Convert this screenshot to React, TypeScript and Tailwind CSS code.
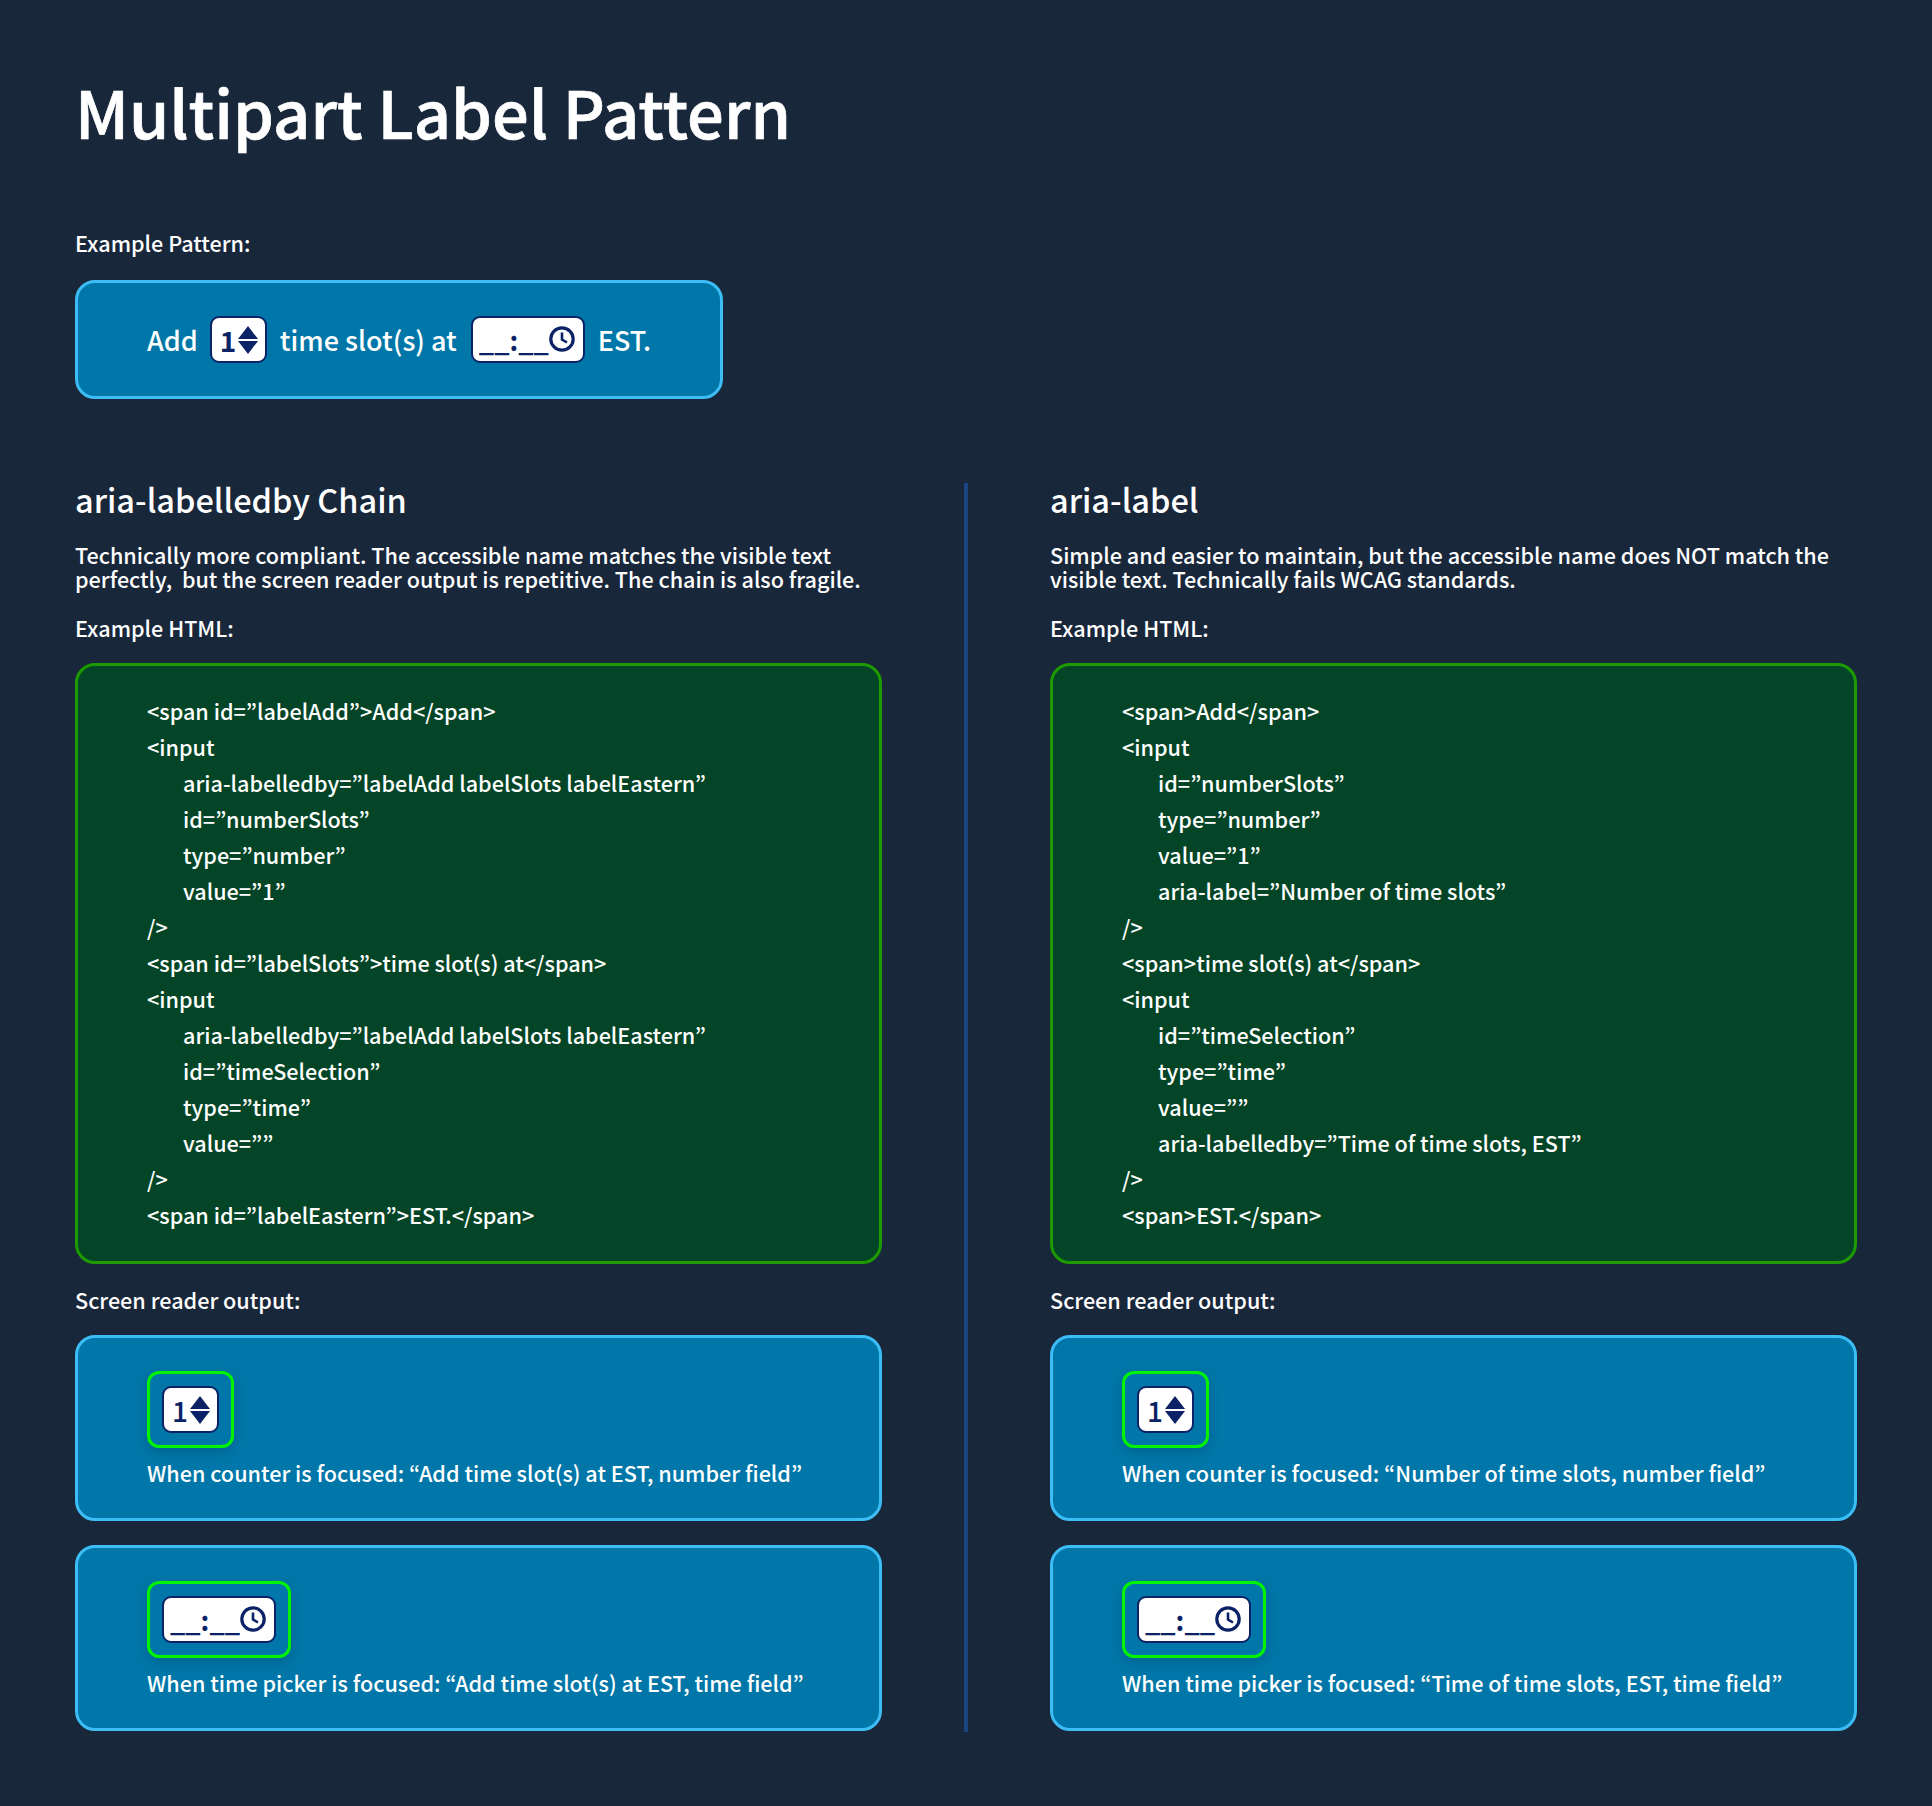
const leftCode: [number, string][] = [
  [0, '<span id=”labelAdd”>Add</span>'],
  [0, '<input'],
  [1, 'aria-labelledby=”labelAdd labelSlots labelEastern”'],
  [1, 'id=”numberSlots”'],
  [1, 'type=”number”'],
  [1, 'value=”1”'],
  [0, '/>'],
  [0, '<span id=”labelSlots”>time slot(s) at</span>'],
  [0, '<input'],
  [1, 'aria-labelledby=”labelAdd labelSlots labelEastern”'],
  [1, 'id=”timeSelection”'],
  [1, 'type=”time”'],
  [1, 'value=””'],
  [0, '/>'],
  [0, '<span id=”labelEastern”>EST.</span>'],
];

const rightCode: [number, string][] = [
  [0, '<span>Add</span>'],
  [0, '<input'],
  [1, 'id=”numberSlots”'],
  [1, 'type=”number”'],
  [1, 'value=”1”'],
  [1, 'aria-label=”Number of time slots”'],
  [0, '/>'],
  [0, '<span>time slot(s) at</span>'],
  [0, '<input'],
  [1, 'id=”timeSelection”'],
  [1, 'type=”time”'],
  [1, 'value=””'],
  [1, 'aria-labelledby=”Time of time slots, EST”'],
  [0, '/>'],
  [0, '<span>EST.</span>'],
];

function Counter({ thin = false }: { thin?: boolean }) {
  return (
    <div className="w-[57px] h-[47px] shrink-0 bg-white border-2 border-[#0b2266] rounded-[9px] flex items-center justify-between pl-[8px] pr-[7px] text-[#0b2266]">
      <span className={`text-[28px] leading-none ${thin ? 'font-medium' : 'font-bold'}`}>1</span>
      <svg width="20" height="28" viewBox="0 0 20 28" className="fill-[#0b2266]">
        <path d="M10 0 L20 13 H0 Z" />
        <path d="M10 28 L0 15 H20 Z" />
      </svg>
    </div>
  );
}

function TimePicker() {
  return (
    <div className="w-[114px] h-[47px] shrink-0 bg-white border-2 border-[#0b2266] rounded-[9px] flex items-center pl-[6px] text-[#0b2266] relative">
      <span className="text-[27px] leading-none font-bold">__:__</span>
      <svg width="26" height="26" viewBox="0 0 26 26" fill="none" stroke="#0b2266" className="absolute right-[8px] top-[8px]">
        <circle cx="13" cy="13" r="11.2" strokeWidth="3.2" />
        <path d="M13 6.5 V13.5 L18 16.5" strokeWidth="2.6" />
      </svg>
    </div>
  );
}

function OutputCard({ children, text }: { children: React.ReactNode; text: string }) {
  return (
    <div className="h-[186px] bg-[#0077a8] border-[3px] border-[#3dbdf5] rounded-[20px] pl-[69px] pt-[33px]">
      <div className="w-fit p-[12px] border-[3px] border-[#00f400] rounded-[12px] shadow-[0_4px_12px_rgba(0,40,80,0.25)]">
        {children}
      </div>
      <p className="mt-[10px] text-[21.6px] leading-[30px] font-medium text-white">{text}</p>
    </div>
  );
}

function Column(props: {
  title: string;
  desc: string[];
  code: [number, string][];
  counterText: string;
  timeText: string;
}) {
  return (
    <section className="w-[807px] shrink-0">
      <h2 className="text-[32.5px] leading-[44px] font-medium text-white">{props.title}</h2>
      <p className="mt-[22px] text-[21.6px] leading-[24px] font-medium text-white">
        {props.desc.map((line) => (
          <span key={line} className="block whitespace-pre">{line}</span>
        ))}
      </p>
      <p className="mt-[22px] text-[21.6px] leading-[30px] font-medium text-white">Example HTML:</p>
      <div className="mt-[20px] h-[601px] bg-[#044527] border-[3px] border-[#1d9a00] rounded-[20px] pl-[69px] pt-[27px]">
        {props.code.map(([indent, line], i) => (
          <div key={i} className={`text-[21.6px] leading-[36px] font-medium text-white whitespace-pre ${indent ? 'pl-[36px]' : ''}`}>
            {line}
          </div>
        ))}
      </div>
      <p className="mt-[21px] text-[21.6px] leading-[30px] font-medium text-white">Screen reader output:</p>
      <div className="mt-[20px] flex flex-col gap-[24px]">
        <OutputCard text={props.counterText}><Counter thin /></OutputCard>
        <OutputCard text={props.timeText}><TimePicker /></OutputCard>
      </div>
    </section>
  );
}

export default function App() {
  return (
    <div className="w-[1932px] h-[1806px] bg-[#19273b] px-[75px] pt-[63px] font-['Noto_Sans_CJK_KR','Noto_Sans',sans-serif]">
      <h1 className="text-[65px] leading-[96px] font-medium text-white [-webkit-text-stroke:0.7px_white]">Multipart Label Pattern</h1>
      <p className="mt-[69px] text-[21.6px] leading-[30px] font-medium text-white">Example Pattern:</p>
      <div className="mt-[22px] w-fit h-[119px] bg-[#0077a8] border-[3px] border-[#3dbdf5] rounded-[20px] px-[69px] flex items-center text-[27px] font-medium text-white">
        <span className="pt-[2px]">Add</span>
        <span className="ml-[12px]"><Counter /></span>
        <span className="ml-[13px] pt-[2px]">time slot(s) at</span>
        <span className="ml-[14px]"><TimePicker /></span>
        <span className="ml-[13px] pt-[2px]">EST.</span>
      </div>
      <div className="mt-[78px] flex">
        <Column
          title="aria-labelledby Chain"
          desc={[
            'Technically more compliant. The accessible name matches the visible text',
            'perfectly,  but the screen reader output is repetitive. The chain is also fragile.',
          ]}
          code={leftCode}
          counterText="When counter is focused: “Add time slot(s) at EST, number field”"
          timeText="When time picker is focused: “Add time slot(s) at EST, time field”"
        />
        <div className="w-[4px] shrink-0 mt-[6px] mb-[-1px] mx-[82px] bg-[#1b4482]" />
        <Column
          title="aria-label"
          desc={[
            'Simple and easier to maintain, but the accessible name does NOT match the',
            'visible text. Technically fails WCAG standards.',
          ]}
          code={rightCode}
          counterText="When counter is focused: “Number of time slots, number field”"
          timeText="When time picker is focused: “Time of time slots, EST, time field”"
        />
      </div>
    </div>
  );
}
